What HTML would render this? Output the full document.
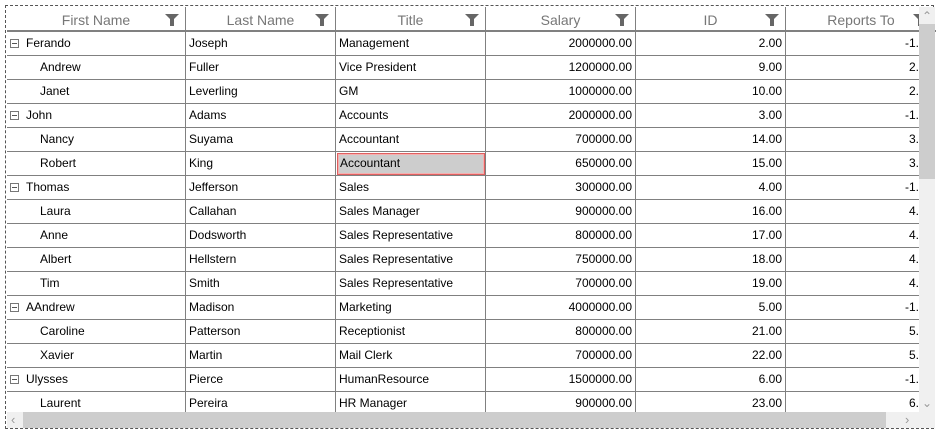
<!DOCTYPE html>
<html><head><style>
body{margin:0;width:939px;height:434px;background:#fff;overflow:hidden;font-family:"Liberation Sans",sans-serif;}
.frame{position:absolute;left:5px;top:5px;width:929px;height:424px;border:1px dashed #555;box-sizing:border-box;}
.c{position:absolute;box-sizing:border-box;font-size:12px;color:#000;white-space:nowrap;overflow:hidden;line-height:23px;}
.h{position:absolute;top:7px;height:25px;box-sizing:border-box;border-right:1px solid #808080;border-bottom:2px solid #808080;color:#777;font-size:14px;line-height:26px;text-align:center;}
.f{position:absolute;right:6px;top:7px;width:0;height:0;border-left:7px solid transparent;border-right:7px solid transparent;border-top:7px solid #666;}
.f:after{content:"";position:absolute;left:-2px;top:-2px;width:4px;height:7px;background:#666;}
.exp{position:absolute;left:10px;width:9px;height:9px;border:1px solid #777;box-sizing:border-box;}
.exp:after{content:"";position:absolute;left:1px;top:3px;width:5px;height:1px;background:#555;}
</style></head><body>
<div class="frame"></div>
<div class="h" style="left:7px;width:179px">First Name<span class="f"></span></div>
<div class="h" style="left:186px;width:150px">Last Name<span class="f"></span></div>
<div class="h" style="left:336px;width:150px">Title<span class="f"></span></div>
<div class="h" style="left:486px;width:150px">Salary<span class="f"></span></div>
<div class="h" style="left:636px;width:150px">ID<span class="f"></span></div>
<div class="h" style="left:786px;width:150px;border-right:none">Reports To<span class="f" style="right:9px"></span></div>
<div id="g"></div>
<div style="position:absolute;left:919px;top:7px;width:16px;height:405px;background:#f0f0f0"></div>
<div style="position:absolute;left:919px;top:24px;width:16px;height:155px;background:#cdcdcd"></div>
<div style="position:absolute;left:922px;top:9px;font-size:12px;color:#999">&#8963;</div>
<div style="position:absolute;left:922px;top:396px;font-size:12px;color:#999">&#8964;</div>
<div style="position:absolute;left:7px;top:412px;width:928px;height:16px;background:#f0f0f0"></div>
<div style="position:absolute;left:23px;top:412px;width:863px;height:16px;background:#cdcdcd"></div>
<div style="position:absolute;left:11px;top:412px;font-size:13px;color:#999">&#8249;</div>
<div style="position:absolute;left:905px;top:412px;font-size:13px;color:#999">&#8250;</div>
<script>
var d=[[1,"Ferando","Joseph","Management","2000000.00","2.00","-1."],
[0,"Andrew","Fuller","Vice President","1200000.00","9.00","2."],
[0,"Janet","Leverling","GM","1000000.00","10.00","2."],
[1,"John","Adams","Accounts","2000000.00","3.00","-1."],
[0,"Nancy","Suyama","Accountant","700000.00","14.00","3."],
[0,"Robert","King","Accountant","650000.00","15.00","3."],
[1,"Thomas","Jefferson","Sales","300000.00","4.00","-1."],
[0,"Laura","Callahan","Sales Manager","900000.00","16.00","4."],
[0,"Anne","Dodsworth","Sales Representative","800000.00","17.00","4."],
[0,"Albert","Hellstern","Sales Representative","750000.00","18.00","4."],
[0,"Tim","Smith","Sales Representative","700000.00","19.00","4."],
[1,"AAndrew","Madison","Marketing","4000000.00","5.00","-1."],
[0,"Caroline","Patterson","Receptionist","800000.00","21.00","5."],
[0,"Xavier","Martin","Mail Clerk","700000.00","22.00","5."],
[1,"Ulysses","Pierce","HumanResource","1500000.00","6.00","-1."],
[0,"Laurent","Pereira","HR Manager","900000.00","23.00","6."]];
var L=[7,186,336,486,636,786],W=[179,150,150,150,150,133],h="";
d.forEach(function(r,i){var t=32+24*i;
for(var j=0;j<6;j++){var s="left:"+L[j]+"px;top:"+t+"px;width:"+W[j]+"px;height:24px;border-bottom:1px solid #808080;"+(j<5?"border-right:1px solid #808080;":"");
var txt=r[j+1],pad;
if(j==0){pad=r[0]?"padding-left:19px;":"padding-left:33px;";}
else if(j>=3){pad="text-align:right;padding-right:3px;";if(j==5)pad="text-align:right;padding-right:0;";}
else pad="padding-left:3px;";
h+='<div class="c" style="'+s+pad+'">'+txt+'</div>';}
if(r[0])h+='<div class="exp" style="top:'+(t+7)+'px"></div>';
});
h+='<div style="position:absolute;left:337px;top:153px;width:148px;height:22px;border:1px solid #e06060;box-sizing:border-box;background:#cdcdcd;box-shadow:inset 0 0 0 1px #f4b0b0"></div><div class="c" style="left:340px;top:152px;">Accountant</div>';
document.getElementById("g").innerHTML=h;
</script>
</body></html>
